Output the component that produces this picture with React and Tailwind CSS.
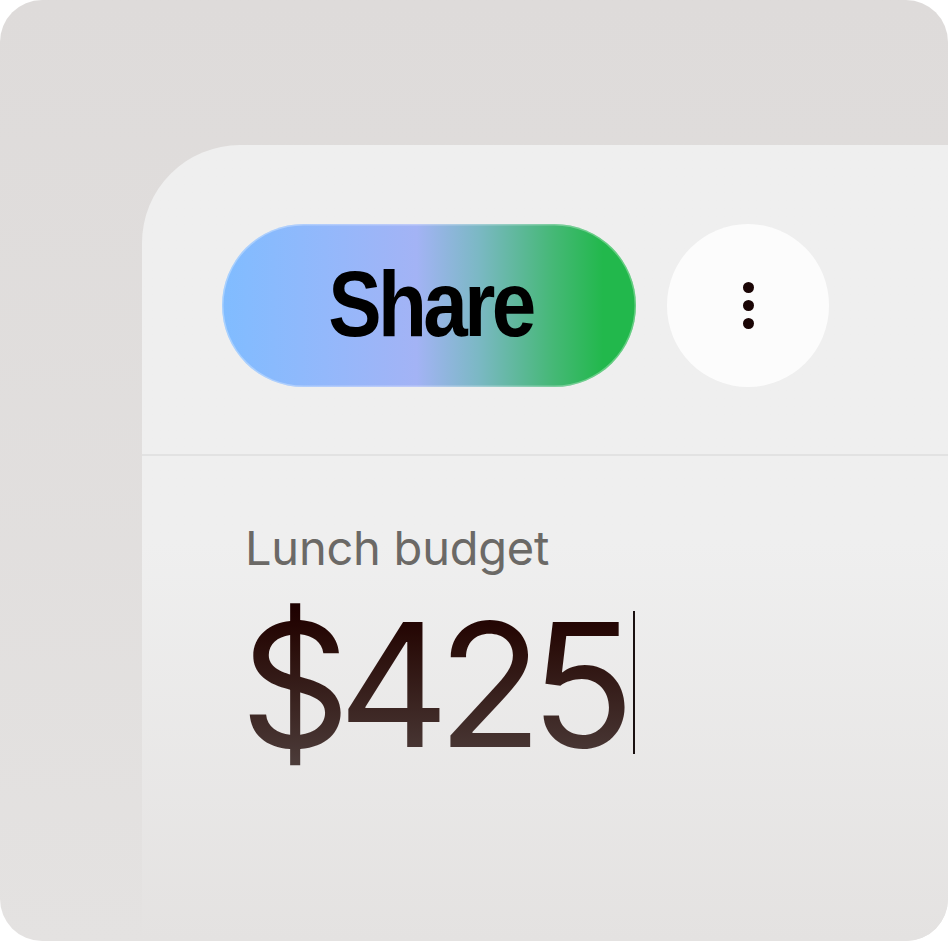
export default function App() {
  return (
    <div className="w-[949px] h-[942px] bg-white">
      <div className="w-[948px] h-[941px] rounded-[42px] overflow-hidden bg-gradient-to-b from-[#dedbda] to-[#e4e2e1] pt-[145px] pl-[142px] flex flex-col">
        <div className="flex-1 rounded-tl-[98px] bg-gradient-to-b from-[#efefef] via-[#efefef] to-[#e4e2e1] flex flex-col">
          <div className="h-[311px] border-b-2 border-[#e2e2e2] pl-[80px] pt-[79px] flex items-start gap-[31px]">
            <button className="w-[414px] h-[163px] rounded-full flex items-center justify-center shadow-[inset_0_0_0_1.5px_rgba(255,255,255,0.3)] bg-[linear-gradient(90deg,#80bcff_0%,#93b8fb_25%,#a3b3f5_47%,#7bb8c4_62%,#45b876_80%,#22b84c_92%)]">
              <span className="block text-[92px] font-bold text-black tracking-[-0.045em] leading-none pb-[4px] pl-[2px] scale-x-[0.87]" style={{ fontFamily: '"Liberation Sans", Arial, sans-serif' }}>Share</span>
            </button>
            <button className="w-[162px] h-[163px] rounded-full bg-[#fcfcfc] flex flex-col items-center justify-center gap-[7px]">
              <span className="w-[11px] h-[11px] rounded-full bg-[#1a0505]" />
              <span className="w-[11px] h-[11px] rounded-full bg-[#1a0505]" />
              <span className="w-[11px] h-[11px] rounded-full bg-[#1a0505]" />
            </button>
          </div>
          <div className="pl-[103px] pt-[68px] flex flex-col" style={{ fontFamily: 'Inter, "Noto Sans", sans-serif' }}>
            <div className="text-[47px] leading-none text-[#6b6966] tracking-[-0.005em]">Lunch budget</div>
            <div className="flex items-center mt-[27px] -ml-[5px]">
              <span className="text-[172px] leading-none tracking-[-0.07em] pr-[14px] bg-gradient-to-b from-[#1c0000] to-[#4d3e3c] bg-clip-text text-transparent">$425</span>
              <span className="w-[2px] h-[143px] bg-[#1a1010] -ml-[4px] -mt-[4px]" />
            </div>
          </div>
        </div>
      </div>
    </div>
  );
}
